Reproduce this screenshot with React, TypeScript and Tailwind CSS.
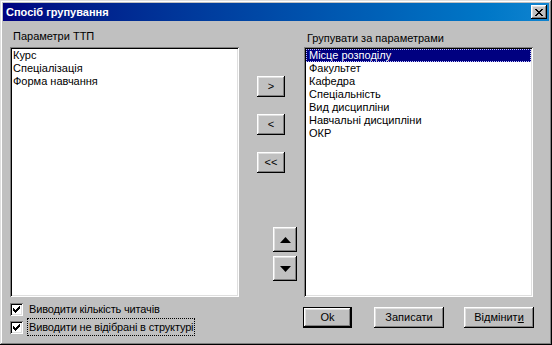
import React from 'react';

// Win98-style bevels, kept as full literal class strings so Tailwind picks them up
const raised =
  'bg-[#c0c0c0] shadow-[inset_-1px_-1px_#000,inset_1px_1px_#fff,inset_-2px_-2px_#808080,inset_2px_2px_#dfdfdf]';
const sunken =
  'bg-white shadow-[inset_1px_1px_#808080,inset_-1px_-1px_#fff,inset_2px_2px_#000,inset_-2px_-2px_#dfdfdf]';

const leftItems = ['Курс', 'Спеціалізація', 'Форма навчання'];
const rightItems = [
  'Місце розподілу',
  'Факультет',
  'Кафедра',
  'Спеціальність',
  'Вид дисципліни',
  'Навчальні дисципліни',
  'ОКР',
];

function CloseGlyph() {
  return (
    <svg width="8" height="7" viewBox="0 0 8 7" shapeRendering="crispEdges">
      <path
        fill="#000"
        d="M0 0h2v1H0zM6 0h2v1H6zM1 1h2v1H1zM5 1h2v1H5zM2 2h4v1H2zM3 3h2v1H3zM2 4h4v1H2zM1 5h2v1H1zM5 5h2v1H5zM0 6h2v1H0zM6 6h2v1H6z"
      />
    </svg>
  );
}

function Check() {
  return (
    <svg width="7" height="7" viewBox="0 0 7 7" shapeRendering="crispEdges">
      <path
        fill="#000"
        d="M6 0h1v1H6zM5 1h2v1H5zM0 2h1v1H0zM4 2h3v1H4zM0 3h2v1H0zM3 3h3v1H3zM0 4h5v1H0zM1 5h3v1H1zM2 6h1v1H2z"
      />
    </svg>
  );
}

function CheckRow({ label, focused }: { label: string; focused?: boolean }) {
  return (
    <div className="flex items-center h-[18px]">
      <div className={`w-[13px] h-[13px] flex items-center justify-center ${sunken}`}>
        <Check />
      </div>
      <div
        className={`ml-[4px] pl-[1px] pr-[1px] h-[18px] flex items-center leading-[13px] whitespace-nowrap tracking-[-0.15px] ${
          focused ? 'border border-dotted border-black' : 'border border-transparent'
        }`}
      >
        {label}
      </div>
    </div>
  );
}

function Button({ children, w, def }: { children: React.ReactNode; w: string; def?: boolean }) {
  if (def) {
    return (
      <div className={`${w} h-[21px] border border-black`}>
        <div className={`w-full h-full flex items-center justify-center ${raised}`}>{children}</div>
      </div>
    );
  }
  return <div className={`${w} h-[21px] flex items-center justify-center ${raised}`}>{children}</div>;
}

export default function App() {
  return (
    <div className="w-[552px] h-[345px] p-[3px] bg-[#c0c0c0] shadow-[inset_-1px_-1px_#000,inset_1px_1px_#dfdfdf,inset_-2px_-2px_#808080,inset_2px_2px_#fff] font-['Liberation_Sans',Arial,sans-serif] text-[11px] text-black flex flex-col overflow-hidden">
      {/* title bar */}
      <div className="h-[18px] flex items-center justify-between bg-gradient-to-r from-[#000080] to-[#1084d0] pl-[3px] pr-[2px]">
        <span className="text-white font-bold text-[11px] leading-[18px]">Спосіб групування</span>
        <div className={`w-[16px] h-[14px] flex items-center justify-center ${raised}`}>
          <CloseGlyph />
        </div>
      </div>

      {/* lists + arrows */}
      <div className="flex pl-[7px]">
        <div className="w-[229px]">
          <div className="pt-[9px] pl-[3px] leading-[13px]">Параметри ТТП</div>
          <div className={`mt-[4px] h-[250px] p-[2px] ${sunken}`}>
            {leftItems.map((t) => (
              <div key={t} className="h-[13px] leading-[13px] pl-[1px]">
                {t}
              </div>
            ))}
          </div>
        </div>

        <div className="w-[65px] flex flex-col">
          <div className="mt-[55px] ml-[18px] flex flex-col gap-[17px]">
            <Button w="w-[28px]">&gt;</Button>
            <Button w="w-[28px]">&lt;</Button>
            <Button w="w-[28px]">&lt;&lt;</Button>
          </div>
          <div className="mt-[54px] ml-[34px] flex flex-col gap-[4px]">
            <div className={`w-[24px] h-[25px] flex items-center justify-center ${raised}`}>
              <svg width="11" height="6" viewBox="0 0 11 6">
                <polygon points="5.5,0 11,6 0,6" fill="#000" />
              </svg>
            </div>
            <div className={`w-[24px] h-[25px] flex items-center justify-center ${raised}`}>
              <svg width="11" height="6" viewBox="0 0 11 6">
                <polygon points="0,0 11,0 5.5,6" fill="#000" />
              </svg>
            </div>
          </div>
        </div>

        <div className="w-[229px]">
          <div className="pt-[11px] pl-[3px] leading-[13px]">Групувати за параметрами</div>
          <div className={`mt-[2px] h-[250px] p-[2px] ${sunken}`}>
            {rightItems.map((t, i) => (
              <div
                key={t}
                className={`h-[13px] leading-[11px] pl-[2px] ${
                  i === 0
                    ? 'bg-[#000080] text-white border border-dotted border-[#c0c0ff]'
                    : 'border border-transparent'
                }`}
              >
                {t}
              </div>
            ))}
          </div>
        </div>
      </div>

      {/* bottom: checkboxes + buttons */}
      <div className="flex pl-[7px]">
        <div className="w-[293px] pt-[3px] flex flex-col">
          <CheckRow label="Виводити кількість читачів" />
          <CheckRow label="Виводити не відібрані в структурі" focused />
        </div>
        <div className="pt-[10px] flex">
          <Button w="w-[49px]" def>
            Ok
          </Button>
          <div className="ml-[22px]">
            <Button w="w-[70px]">Записати</Button>
          </div>
          <div className="ml-[20px]">
            <Button w="w-[70px]">
              <span>
                Відмінит<span className="underline">и</span>
              </span>
            </Button>
          </div>
        </div>
      </div>
    </div>
  );
}
